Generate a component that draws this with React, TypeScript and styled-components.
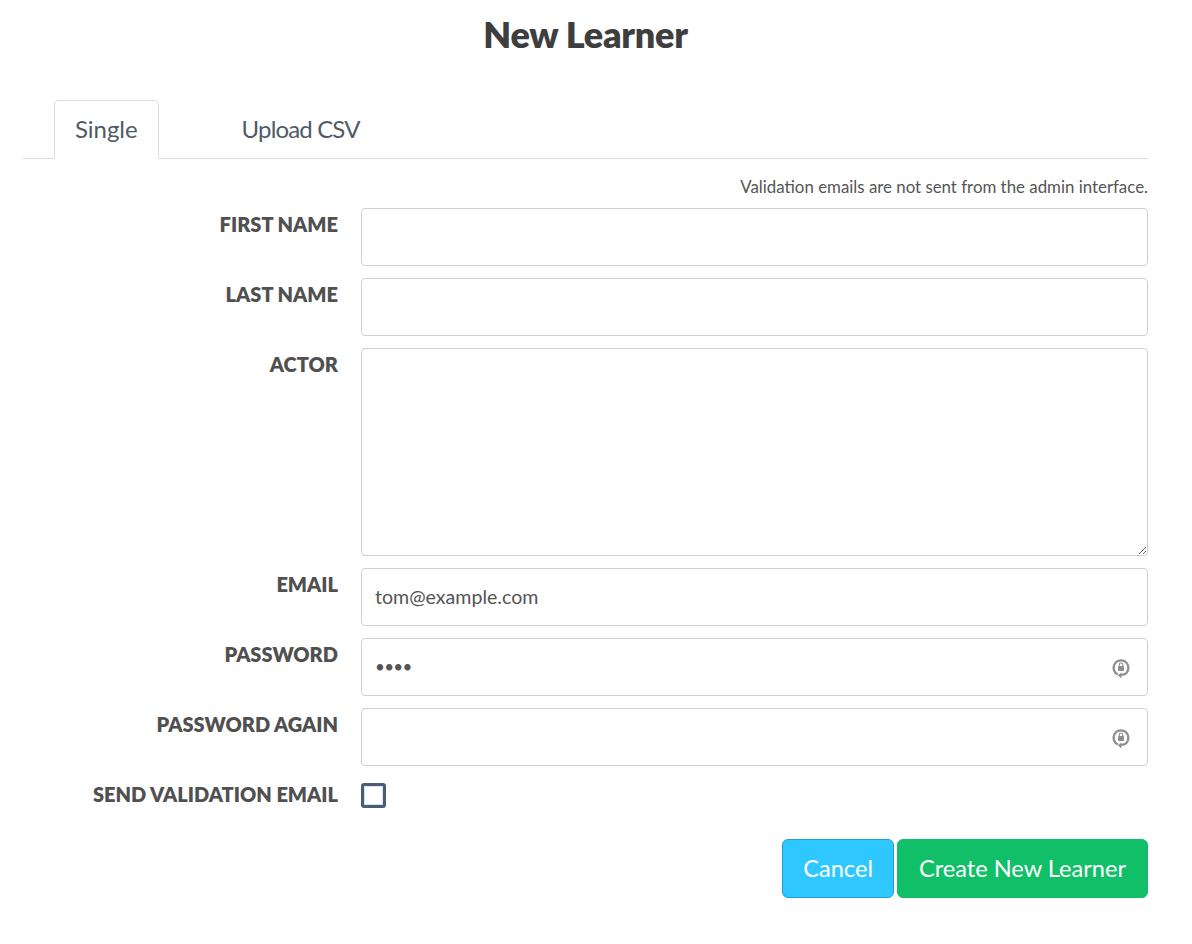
import React from 'react'
import styled, { createGlobalStyle } from 'styled-components'

const GlobalStyle = createGlobalStyle`
  * { box-sizing: border-box; }
  html, body { margin: 0; background: #fff; }
  body { font-family: Lato, "Noto Sans", sans-serif; color: #4a4a4a; }
`

const Page = styled.div`
  width: 1192px;
  padding: 0 44px 0 23px;
`

const Title = styled.h1`
  margin: 0;
  padding-top: 12px;
  height: 100px;
  text-align: center;
  font-size: 36px;
  line-height: 44px;
  font-weight: 800;
  letter-spacing: -0.25px;
  color: #3e3e3e;
`

const Tabs = styled.div`
  display: flex;
  height: 59px;
  padding-left: 31px;
  border-bottom: 1px solid #dedede;
`

const Tab = styled.div<{ $active?: boolean }>`
  height: 59px;
  padding: 0 20px;
  margin-right: 62px;
  font-size: 24px;
  font-weight: 400;
  line-height: 56px;
  letter-spacing: ${(p) => (p.$active ? '-0.05px' : '-0.85px')};
  color: #4f5b66;
  border: 1px solid ${(p) => (p.$active ? '#dedede' : 'transparent')};
  border-bottom-color: ${(p) => (p.$active ? '#fff' : 'transparent')};
  border-radius: 5px 5px 0 0;
  background: ${(p) => (p.$active ? '#fff' : 'transparent')};
`

const Note = styled.p`
  margin: 0;
  height: 49px;
  padding-top: 18px;
  text-align: right;
  font-size: 16.85px;
  line-height: 20px;
  color: #555;
`

const Form = styled.form`
  display: grid;
  grid-template-columns: 315px 787px;
  column-gap: 23px;
  row-gap: 12px;
`

const Label = styled.label`
  padding-top: 3px;
  text-align: right;
  font-size: 20px;
  line-height: 26px;
  font-weight: 800;
  color: #505050;
`

const FieldBox = styled.div`
  position: relative;
  height: 58px;
`

const Input = styled.input`
  display: block;
  width: 100%;
  height: 58px;
  padding: 0 13px 1px;
  border: 1px solid #cfcfcf;
  border-radius: 4px;
  outline: none;
  font-family: Lato, "Noto Sans", sans-serif;
  font-size: 19.6px;
  color: #555;
  background: #fff;

  &[type='password'] {
    font-size: 17px;
    letter-spacing: -0.7px;
    -webkit-text-security: square;
  }
`

const TextArea = styled.textarea`
  display: block;
  width: 100%;
  height: 208px;
  padding: 13px;
  border: 1px solid #cfcfcf;
  border-radius: 4px;
  outline: none;
  font-family: Lato, "Noto Sans", sans-serif;
  font-size: 18px;
`

const KeyIcon = styled.svg`
  position: absolute;
  right: 17px;
  top: 19px;
  width: 20px;
  height: 22px;
`

const Check = styled.input`
  appearance: none;
  display: block;
  width: 25px;
  height: 25px;
  margin: 5px 0 0;
  border: 3px solid #4b5d72;
  border-radius: 3px;
  background: #fff;
  box-shadow: inset 0 0 0 1px #cfe2ff;
`

const Actions = styled.div`
  display: flex;
  justify-content: flex-end;
  gap: 3px;
  margin-top: 31px;
`

const Button = styled.button<{ $color: string; $border: string; $pad: number }>`
  height: 59px;
  padding: 0 ${(p) => p.$pad}px 2px;
  border: 1px solid ${(p) => p.$border};
  border-radius: 6px;
  background: ${(p) => p.$color};
  color: #fff;
  font-family: Lato, "Noto Sans", sans-serif;
  font-size: 23.6px;
`

const PasswordKey = () => (
  <KeyIcon viewBox="0 0 20 22" fill="none">
    <path d="M6.8 17.4A7.4 7.4 0 1 1 13.2 17.4L10 18" stroke="#8f8f8f" strokeWidth="2.2" />
    <path d="M10.4 15.4v6l-3.6-3.2z" fill="#8f8f8f" />
    <rect x="7" y="9" width="6" height="5" rx="0.8" fill="#8f8f8f" />
    <path d="M8.2 9.2V7.8a1.8 1.8 0 0 1 3.6 0v1.4" stroke="#8f8f8f" strokeWidth="1.1" />
  </KeyIcon>
)

export default function App() {
  return (
    <Page>
      <GlobalStyle />
      <Title>New Learner</Title>
      <Tabs>
        <Tab $active>Single</Tab>
        <Tab>Upload CSV</Tab>
      </Tabs>
      <Note>Validation emails are not sent from the admin interface.</Note>
      <Form>
        <Label>FIRST NAME</Label>
        <FieldBox>
          <Input type="text" />
        </FieldBox>
        <Label>LAST NAME</Label>
        <FieldBox>
          <Input type="text" />
        </FieldBox>
        <Label>ACTOR</Label>
        <TextArea />
        <Label>EMAIL</Label>
        <FieldBox>
          <Input type="text" defaultValue="tom@example.com" />
        </FieldBox>
        <Label>PASSWORD</Label>
        <FieldBox>
          <Input type="password" defaultValue="test" />
          <PasswordKey />
        </FieldBox>
        <Label>PASSWORD AGAIN</Label>
        <FieldBox>
          <Input type="password" />
          <PasswordKey />
        </FieldBox>
        <Label>SEND VALIDATION EMAIL</Label>
        <div>
          <Check type="checkbox" />
        </div>
      </Form>
      <Actions>
        <Button type="button" $color="#2fc7ff" $border="#1f9fd6" $pad={20}>Cancel</Button>
        <Button type="button" $color="#10bf67" $border="#10bf67" $pad={21}>Create New Learner</Button>
      </Actions>
    </Page>
  )
}
